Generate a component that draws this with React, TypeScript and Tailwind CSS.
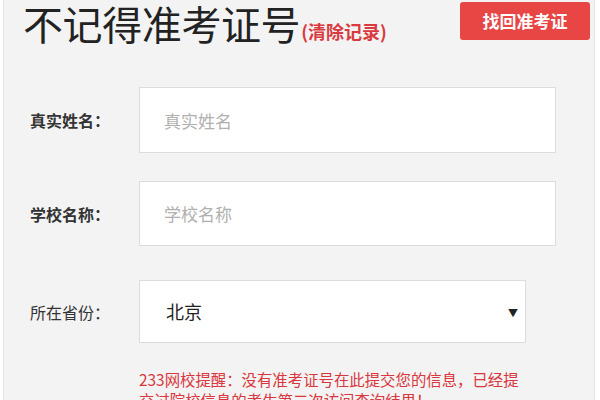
import { useState } from "react";

const fields = [
  { label: "真实姓名：", placeholder: "真实姓名", height: "h-[66px]" },
  { label: "学校名称：", placeholder: "学校名称", height: "h-[65px]" },
];

export default function App() {
  const [province, setProvince] = useState("北京");

  return (
    <div
      className="w-[600px] h-[400px] overflow-hidden bg-white"
      style={{ fontFamily: '"Noto Sans CJK SC", "Noto Sans", sans-serif' }}
    >
      <div className="ml-[3px] w-[592px] h-full bg-[#f3f3f3] border-x border-[#e4e4e4]">
        <div className="flex items-start justify-between pl-[19px] pr-[4px] pt-[2px]">
          <h1 className="flex items-end text-[40px] leading-[42px] text-[#222] tracking-[-0.4px]">
            不记得准考证号
            <span className="ml-[1px] mb-[3px] text-[18px] leading-[20px] font-bold text-[#d93a3f] tracking-normal">
              (清除记录)
            </span>
          </h1>
          <button className="w-[130px] h-[38px] rounded-[3px] bg-[#e84545] text-white text-[17px] font-bold">
            找回准考证
          </button>
        </div>

        <div className="mt-[43px] flex flex-col">
          {fields.map((f, i) => (
            <div key={f.label} className={`flex items-center ${i > 0 ? "mt-[28px]" : ""}`}>
              <label className="w-[135px] pl-[26px] text-[16px] font-semibold text-[#333]">{f.label}</label>
              <input
                className={`w-[417px] ${f.height} bg-white border border-[#dcdcdc] pl-[24px] text-[17px] text-[#333] placeholder:text-[#b0b0b0] outline-none`}
                placeholder={f.placeholder}
              />
            </div>
          ))}

          <div className="mt-[34px] flex items-center">
            <label className="w-[135px] pl-[26px] text-[16px] text-[#333]">所在省份：</label>
            <div className="relative w-[387px] h-[63px] bg-white border border-[#dcdcdc]">
              <select
                value={province}
                onChange={(e) => setProvince(e.target.value)}
                className="w-full h-full appearance-none bg-transparent pl-[26px] text-[18px] text-[#222] outline-none"
              >
                <option>北京</option>
                <option>上海</option>
                <option>天津</option>
                <option>重庆</option>
              </select>
              <span className="absolute right-[7px] top-1/2 -translate-y-1/2 text-[10px] text-[#222] pointer-events-none">
                ▼
              </span>
            </div>
          </div>

          <p className="mt-[26px] ml-[135px] w-[384px] text-[15.4px] leading-[21px] text-[#d9363e]">
            233网校提醒：没有准考证号在此提交您的信息，已经提交过院校信息的考生第二次访问查询结果！
          </p>
        </div>
      </div>
    </div>
  );
}
